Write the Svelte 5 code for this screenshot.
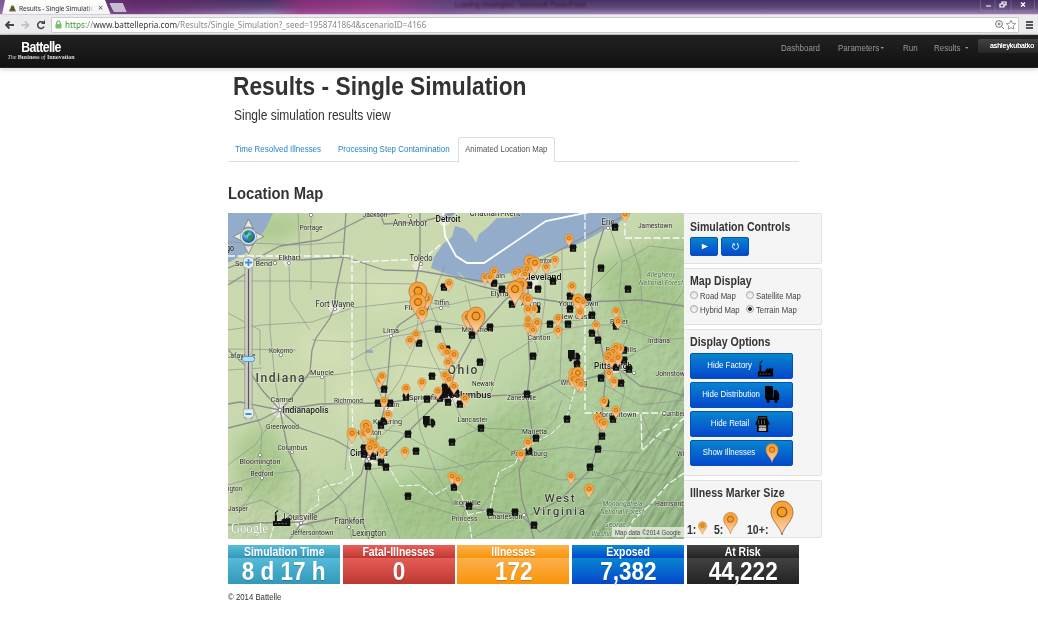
<script>
  const stats = [
    { name: 'Simulation Time', value: '8 d 17 h', kind: 'info' },
    { name: 'Fatal-Illnesses', value: '0', kind: 'danger' },
    { name: 'Illnesses', value: '172', kind: 'warning' },
    { name: 'Exposed', value: '7,382', kind: 'primary' },
    { name: 'At Risk', value: '44,222', kind: 'inverse' }
  ];

  // [text, centre x, centre y, width, font size, style]
  const labels = [
    ['Portage', 311, 227.5, 23, 7], ['Jackson', 375, 214, 25, 7], ['Ann Arbor', 410, 222.5, 34, 7.5],
    ['Detroit', 448, 219, 25, 8, 'city'], ['Chatham-Kent', 495, 213, 51, 7.5], ['Elkhart', 289.5, 257.5, 22, 7],
    ['South Bend', 253.5, 263.5, 37, 7], ['go', 230, 248, 8, 8, 'city'], ['Toledo', 421, 258, 23, 7.5],
    ['Fort Wayne', 335, 303.5, 39, 7.5], ['Tiffin', 441.5, 302, 15, 6.5], ['Findlay', 417, 307.5, 25, 7],
    ['Lima', 391, 330.5, 16, 7], ['Lafayette', 241, 355, 29, 7], ['Kokomo', 281, 350.5, 24, 6.5],
    ['Muncie', 322, 372.5, 24, 6.5], ['Indiana', 280, 377.5, 49, 10.5, 'state'], ['Ohio', 462.5, 369.5, 30, 10.5, 'state'],
    ['Richmond', 348.5, 400, 29, 6.5], ['Carmel', 282, 399.5, 23, 7], ['Indianapolis', 305.5, 410, 46, 8, 'city'],
    ['Greenwood', 282.5, 426.5, 33, 6.8], ['Columbus', 292.5, 447.5, 30, 6.8], ['Bloomington', 260, 461, 41, 7],
    ['Bedford', 262, 473, 23, 6.8], ['ngton', 234, 488, 16, 6.8], ['Jasper', 238, 508, 20, 6.5],
    ['Louisville', 300.5, 516.5, 34, 7.5], ['Jeffersontown', 312, 532.5, 43, 6.7], ['Frankfort', 349.5, 521.5, 30, 7.2],
    ['Lexington', 369, 532.5, 34, 7.5], ['Cincinnati', 369, 453, 38, 8, 'city'], ['Kettering', 387.5, 421.5, 29, 7],
    ['Hamilton', 368, 432, 27, 7], ['Dayton', 389, 404, 20, 7], ['Springfield', 427, 397.5, 36, 7],
    ['Columbus', 470, 395, 43, 8, 'city'], ['Newark', 483, 383, 22, 6.5], ['Lancaster', 472.5, 419.5, 30, 6.7],
    ['Zanesville', 521.5, 397, 29, 6.7], ['Marietta', 534.5, 431.5, 25, 6.7], ['Parkersburg', 529, 453, 36, 7],
    ['Wheeling', 574, 382.5, 27, 6.7], ['Ironville', 467.5, 502, 27, 7], ['Princess', 464.5, 518.5, 26, 6.5],
    ['Charleston', 505, 516, 35, 7], ['West', 559.5, 498, 30, 10, 'state'], ['Virginia', 559, 511, 52, 10, 'state'],
    ['Monongahela', 622.5, 504, 40, 6.2, 'park'], ['National Forest', 622, 512, 44, 6.2, 'park'],
    ['George', 615, 525, 22, 6.2, 'park'], ['Washin', 601.5, 533.5, 20, 6.2, 'park'],
    ['Harrisonburg', 675, 503.5, 40, 6.8], ['Winchester', 693, 453.5, 32, 6.8], ['Cumberland', 680, 413.5, 36, 6.8],
    ['Morgantown', 616, 414.5, 41, 7], ['Johnstown', 672, 373, 33, 6.8], ['Pittsburgh', 613, 366, 38, 8, 'city'],
    ['Penn Hills', 621, 349, 31, 6.8], ['Butler', 619, 321.5, 18, 6.8], ['Indiana', 659, 340, 22, 6.5],
    ['New Castle', 577, 316, 37, 6.8], ['Youngstown', 578.5, 303, 40, 7], ['Canton', 539, 337.5, 23, 7],
    ['Akron', 531, 303.5, 20, 7], ['Mansfield', 477.5, 329, 32, 7], ['Elyria', 499.5, 293, 18, 7],
    ['Lorain', 495, 275.5, 20, 7], ['Cleveland', 542, 277, 39, 8, 'city'], ['Mentor', 543, 260, 18, 6.8],
    ['Erie', 608, 221.5, 13, 7.5], ['Jamestown', 655, 225.5, 34, 7],
    ['Allegheny', 661, 275, 29, 6.2, 'park'], ['National Forest', 661, 283, 44, 6.2, 'park']
  ];

  const roads = {
    major: [
      '228,268 250,260 300,260 345,257 384,270 420,271 455,277 500,284 530,278',
      '346,213 343,258 336,290 334,308 330,318 316,338 312,350 310,372 290,400 280,410',
      '250,262 280,246 320,240 368,216 400,213', '228,285 252,270',
      '420,213 420,262 416,280 418,312 399,325 391,336 388,375 384,410 376,440 369,458 366,480 362,520 369,539',
      '228,350 245,365 262,390 280,410 300,428 335,440 366,458', '280,410 240,402 228,404',
      '280,410 320,404 385,403 420,398 450,393 490,396 527,394 560,380 582,380 600,375 615,366',
      '280,410 288,450 300,475 300,525 290,539', '228,428 260,420 280,410',
      '366,458 380,460 400,440 435,405 450,393 455,370 474,335 505,300 525,285',
      '300,525 335,518 362,522', '366,458 361,475 335,500 302,522 260,523 228,525',
      '455,278 480,286 520,296 560,302 584,302 640,300 684,306', '528,285 528,330 530,370 527,395 532,430 528,452 519,470 522,500 527,515 534,539',
      '460,506 480,510 520,515 540,532 560,520 571,510', '530,266 560,250 604,226 630,213',
      '604,228 594,260 590,300 600,340 604,360 605,385 602,412 598,445 590,470 560,500 530,515',
      '615,366 640,386 665,390 684,396', '380,213 384,224 420,222 455,213'
    ],
    minor: [
      '228,242 300,245 344,242', '311,213 311,290', '228,281 300,281 343,283 420,284', '270,262 270,330 275,380 280,410',
      '289,263 290,300 310,330', '228,330 262,325 312,322 352,308 420,300 450,307', '228,313 260,330 260,365', '296,350 228,349',
      '312,340 352,342 390,335 430,320 476,328', '366,260 366,360 384,403', '352,360 391,337 440,329 478,328 530,325 580,320',
      '270,380 325,376 370,370 400,365 450,370', '325,376 325,407', '348,404 348,440 345,470', '250,400 262,430 260,462 262,480 240,510',
      '280,410 255,445 228,465', '228,485 262,475 300,470', '325,480 345,505 349,525 352,539', '366,470 400,465 440,470 480,462 520,460',
      '364,460 385,500 400,539', '410,470 440,500 466,506 455,539', '416,398 420,430 435,470 454,505',
      '450,393 462,420 490,438 510,450 528,452', '450,393 430,350 418,312', '455,370 440,330 430,305 445,265', '465,285 476,330 486,360 480,380',
      '490,396 500,360 525,345 540,335', '540,336 560,330 590,325 619,325 659,340 684,338', '530,325 538,350 533,370',
      '528,394 550,385 572,400 566,420', '536,440 555,420 562,400', '530,470 560,480 598,478 630,470 665,475 684,460',
      '529,452 565,447 598,450 640,453', '615,366 640,350 660,340 670,310 684,290', '615,366 630,330 619,300 622,262 610,228',
      '622,262 650,246 684,250', '630,240 640,270 642,305', '590,290 618,262', '545,260 545,300 540,335', '562,250 562,330 560,380',
      '528,280 560,270 585,268', '605,385 640,405 684,400', '641,413 650,435 684,450', '590,470 620,480 642,510 640,539',
      '571,510 600,503 640,508 670,500 684,515', '528,515 500,525 470,539', '480,510 500,480 528,460', '384,403 400,380 415,345 418,320',
      '376,440 400,420 428,398', '384,430 400,432 435,452 470,470 500,450', '300,260 298,213', '228,370 262,368', '228,510 262,500 300,520',
      '455,440 480,428 525,430', '405,500 440,510 466,518', '320,539 312,525 300,525', '530,300 500,296 470,300 418,312', '618,366 625,390 619,415'
    ]
  };

  // [centre x, top y, height]
  const pins = [
    [625, 210, 13], [569, 234, 13], [555, 256, 12], [546, 263, 12], [530, 255, 18], [535, 257, 18], [527, 264, 14], [525, 270, 12],
    [519, 267, 12], [515, 269, 12], [494, 267, 13], [485, 273, 12], [490, 273, 12], [521, 278, 20], [515, 281, 25],
    [525, 293, 14], [528, 294, 15], [528, 305, 13], [534, 305, 12], [528, 316, 11], [528, 321, 13], [537, 318, 14], [533, 326, 12],
    [558, 314, 13], [558, 326, 13], [572, 282, 13], [578, 294, 18], [583, 298, 12], [580, 308, 13], [616, 307, 12], [618, 317, 13],
    [596, 321, 12], [468, 311, 19], [472, 313, 16], [476, 307, 28], [449, 279, 13], [427, 293, 17], [424, 292, 13], [418, 282, 28],
    [418, 294, 25], [422, 307, 17], [416, 330, 13], [410, 336, 13], [442, 343, 13], [447, 348, 13], [454, 350, 14], [448, 358, 13],
    [445, 371, 13], [449, 375, 13], [454, 382, 13], [380, 376, 13], [382, 372, 13], [406, 384, 13], [422, 378, 13], [438, 387, 13],
    [384, 397, 12], [388, 410, 13], [352, 428, 16], [366, 420, 18], [364, 429, 14], [368, 426, 14], [372, 438, 14], [375, 442, 13],
    [370, 443, 14], [382, 447, 13], [405, 447, 13], [452, 472, 13], [458, 475, 13], [465, 394, 13], [574, 368, 16], [578, 367, 18],
    [573, 374, 15], [578, 376, 16], [581, 380, 13], [620, 344, 13], [616, 343, 13], [613, 347, 13], [609, 350, 14], [607, 354, 12],
    [618, 353, 14], [612, 357, 11], [609, 369, 12], [614, 377, 13], [604, 397, 13], [616, 406, 13], [598, 413, 15], [601, 417, 14],
    [604, 419, 13], [528, 438, 13], [521, 450, 13], [571, 472, 13], [589, 484, 15]
  ];

  const stores = [
    [444, 287], [438, 329], [419, 343], [447, 349], [432, 376], [615, 227], [573, 248], [601, 268], [628, 289], [588, 297],
    [570, 296], [553, 281], [529, 285], [538, 289], [537, 309], [494, 283], [502, 289], [512, 304], [570, 309], [592, 315],
    [550, 324], [568, 324], [592, 333], [598, 340], [616, 326], [490, 327], [472, 335], [533, 356], [480, 362], [577, 364],
    [601, 378], [624, 350], [624, 360], [616, 367], [629, 369], [384, 389], [378, 403], [390, 403], [406, 397], [427, 399],
    [445, 387], [445, 394], [448, 402], [456, 393], [460, 404], [381, 425], [384, 421], [408, 434], [416, 451], [452, 442],
    [364, 448], [364, 454], [373, 456], [368, 466], [381, 462], [386, 467], [408, 496], [454, 487], [481, 428], [527, 394],
    [567, 419], [536, 438], [529, 451], [621, 383], [613, 419], [602, 436], [598, 449], [590, 467], [469, 506], [490, 512],
    [515, 512], [534, 525], [606, 403], [451, 390], [440, 398]
  ];

  const towns = [
    [311, 215], [275, 263], [289, 263], [335, 309], [391, 336], [281, 355], [322, 377], [280, 410], [260, 455], [262, 478],
    [301, 523], [369, 459], [421, 264], [441, 308], [410, 216], [608, 228], [349, 527], [292, 452], [524, 515], [634, 373]
  ];
  const urban = [
    [280, 410, 9], [335, 308, 7], [418, 266, 6], [369, 458, 8], [301, 522, 7], [450, 393, 13], [462, 400, 9], [530, 282, 10],
    [615, 364, 11], [388, 408, 7], [530, 302, 7], [445, 219, 8], [607, 228, 4], [391, 335, 4], [288, 262, 5], [452, 385, 8]
  ];
</script>

{#snippet pin(x, y, h)}
  <g transform="translate({x} {y}) scale({h / 34})">
    <path d="M0 34C-2 25-11 20-11 11a11 11 0 0 1 22 0C11 20 2 25 0 34Z" fill="url(#pinFill)" stroke="#b3743f" stroke-width="1" />
    <circle cy="11" r="4.8" fill="#f79b23" stroke="#8b5520" stroke-width="1.3" />
  </g>
{/snippet}

{#snippet truck()}
  <path d="M0 0h10v12H0zM11 4h4l3 4v5H11zM1 12h17v2H1z" /><circle cx="4" cy="15" r="2" /><circle cx="14" cy="15" r="2" />
{/snippet}

{#snippet factory()}
  <path d="M0 12h18v6H0zM2 5l2-1v9H2zM9 10l3-2v2l3-3v2l3-1v6H9z" />
  <path d="M3 4C1 2 5 1 5-1" fill="none" stroke="currentColor" stroke-width="1.2" />
  <path d="M2 15h14" stroke="#777" stroke-width="1" stroke-dasharray="2 1.5" />
{/snippet}

<div class="window">
  <div class="tabstrip">
    <div class="tab">
      <svg class="favicon" viewBox="0 0 10 10"><path d="M3 4a2 2 0 0 1 4 0v1l2 4H1l2-4z" fill="#7c7542" /><path d="M2 7h6M3 5h4" stroke="#3d3a22" /></svg>
      <span class="tabname">Results - Single Simulation</span><span class="x">×</span>
    </div>
    <svg class="newtab" viewBox="0 0 18 9"><path d="M1 .5h12.500l3.500 8H5z" fill="#c7bcd6" stroke="#e0d8e8" stroke-width=".7" /></svg>
    <span class="behind">Loading Strategies - Microsoft PowerPoint</span>
    <svg class="winctl" viewBox="0 0 56 12"><path d="M.5 0v9q0 2 2 2h50q2 0 2-2V0M15 0v11M31 0v11" fill="none" stroke="#9c89ac" stroke-width=".6" opacity=".7" /><path d="M6 6h5M20 4h4v3h-4zM22 4V2h4v3h-2M41 2.500l4 4M45 2.500l-4 4" fill="none" stroke="#fff" stroke-width="1.200" /></svg>
  </div>
  <div class="toolbar">
    <svg class="nav" viewBox="0 0 50 20"><path d="M14 10H6M9.500 6.500 6 10l3.500 3.500" fill="none" stroke="#444" stroke-width="1.800" /><path d="M21 10h7M25 6.500l3.500 3.500-3.500 3.500" fill="none" stroke="#bbb" stroke-width="1.500" /><path d="M43.500 8A3.300 3.300 0 1 0 44 11.500" fill="none" stroke="#444" stroke-width="1.500" /><path d="M45 5v4h-4z" fill="#444" /></svg>
    <div class="address">
      <svg class="lock" viewBox="0 0 8 10"><path d="M2 5V3a2 2 0 0 1 4 0v2" fill="none" stroke="#5dab4c" stroke-width="1.200" /><rect x=".5" y="4.500" width="7" height="5" rx=".8" fill="#77c164" /></svg>
      <span class="url"><i>https</i>://<b>www.battellepria.com</b>/Results/Single_Simulation?_seed=1958741864&amp;scenarioID=4166</span>
      <svg class="pageicons" viewBox="0 0 24 12"><circle cx="5" cy="5" r="3.400" fill="none" stroke="#777" stroke-width="1" /><path d="M7.500 7.500 10 10M3.500 5h3M5 3.500v3" stroke="#777" stroke-width="1" /><path d="m17 1.200 1.400 3 3.300.4-2.400 2.300.6 3.300-2.900-1.600-2.900 1.600.6-3.300-2.400-2.300 3.300-.4z" fill="#fff" stroke="#888" stroke-width=".9" /></svg>
    </div>
    <div class="menu"><i></i><i></i><i></i></div>
  </div>

  <header>
    <div class="brand"><strong>Battelle</strong><em>The <b>Business</b> of <b>Innovation</b></em></div>
    <nav>
      <a class="n1">Dashboard</a><a class="n2">Parameters<s></s></a><a class="n3">Run</a><a class="n4">Results <s class="far"></s></a>
      <span class="user">ashleykubatko</span>
    </nav>
  </header>

  <main>
    <h1>Results - Single Simulation</h1>
    <p class="lead">Single simulation results view</p>
    <div class="tabs"><a class="t1">Time Resolved Illnesses</a><a class="t2">Processing Step Contamination</a><a class="active"><span>Animated Location Map</span></a></div>
    <h2>Location Map</h2>

    <div class="content">
      <svg class="map" viewBox="228 213 456 326">
        <defs>
          <linearGradient id="land" x1="0" y1="0" x2="1" y2="1"><stop offset="0" stop-color="#ccd8b0" /><stop offset=".45" stop-color="#c8d9ad" /><stop offset=".65" stop-color="#b6d3a1" /><stop offset="1" stop-color="#9cc18d" /></linearGradient>
          <linearGradient id="pinFill" x1="0" y1="0" x2="0" y2="1"><stop offset="0" stop-color="#f9a02a" /><stop offset=".4" stop-color="#f8aa4d" /><stop offset="1" stop-color="#fbdcc5" /></linearGradient>
          <linearGradient id="rail"><stop offset="0" stop-color="#a8a8a0" /><stop offset=".5" stop-color="#f6f6f2" /><stop offset="1" stop-color="#a8a8a0" /></linearGradient>
          <radialGradient id="globe" cx=".4" cy=".35"><stop offset="0" stop-color="#a9dcf8" /><stop offset="1" stop-color="#1b62b8" /></radialGradient>
          <filter id="relief" x="0" y="0" width="1" height="1"><feTurbulence type="fractalNoise" baseFrequency=".13" numOctaves="4" seed="4" /><feDiffuseLighting surfaceScale="2" lighting-color="#fff"><feDistantLight azimuth="225" elevation="55" /></feDiffuseLighting></filter>
          <filter id="ridge" x="0" y="0" width="1" height="1"><feTurbulence type="fractalNoise" baseFrequency=".02 .17" numOctaves="3" seed="9" /><feDiffuseLighting surfaceScale="3.600" lighting-color="#fff"><feDistantLight azimuth="260" elevation="52" /></feDiffuseLighting></filter>
          <filter id="soft"><feGaussianBlur stdDeviation="9" /></filter>
          <mask id="hills"><path d="M228 480 260 440 300 470 400 500 450 450 500 400 550 350 610 280 640 240 700 230V560H228Z" fill="#bbb" filter="url(#soft)" /></mask>
          <mask id="east"><path d="M710 330 650 400 635 450 600 485 560 539V570H710Z" fill="#fff" filter="url(#soft)" /></mask>
        </defs>
        <rect x="228" y="213" width="456" height="326" fill="url(#land)" />
        <g fill="#dde3bb" filter="url(#soft)" opacity=".5"><path d="M345 270H450L430 300 370 315ZM390 350H470V400H400ZM330 380H370V420H340ZM300 330H350V370H300Z" /></g>
        <g fill="#a3c688" filter="url(#soft)" opacity=".75"><path d="M250 213H320L280 245 250 240ZM235 440 270 420 295 470 280 500 240 500ZM370 490 450 470 470 430 540 400 560 500 500 539H400ZM590 260 684 240V350L620 330Z" /></g>
        <g mask="url(#hills)" class="shade soft-relief"><rect x="228" y="213" width="456" height="326" filter="url(#relief)" /></g>
        <g mask="url(#east)" class="shade"><g transform="rotate(-58 650 470)"><rect x="460" y="320" width="380" height="340" filter="url(#ridge)" /></g></g>
        <g fill="#e9e6da">{#each urban as [x, y, r]}<path d="M{x - r} {y}l{r * .5}-{r * .7} {r * .7} 0 {r * .7} {r * .6}-{r * .4} {r * .8}-{r * .9} {r * .2}z" />{/each}</g>
        <g fill="#93acca">
          <path d="M228 213H273L266 228 255 243 246 253 235 259 228 263Z" />
          <path d="M431 268 434 257 443 244 452 237 455 226 465 229 472 236 476 243 479 234 486 229 497 218 510 218 521 213H631L617 224 606 229 590 238 572 247 550 253 536 258 527 267 512 273 497 275 482 283 468 280 456 271 463 278 447 274Z" />
          <path d="M446 213h8l-3 7-8-1zM366 350h7v3h-7zM453 357h5l-3 3z" />
        </g>
        <g fill="none" stroke="#8b908b" stroke-linejoin="round">
          {#each roads.minor as p}<polyline points={p} stroke-width=".75" opacity=".85" />{/each}
          {#each roads.major as p}<polyline points={p} stroke-width="1.300" />{/each}
        </g>
        <g fill="none" stroke="#fff" stroke-width="1.300">
          <polyline points="443,213 445,236 456,256 467,263 484,263 546,221 590,212" stroke-width="1.800" />
          <g stroke-dasharray="7 2.500" opacity=".9"><path d="M228 256H352V400M353 262 424 259 441 244M585 213V413H684M625 219V238H684M641 414 642 451 662 431 673 428 684 418" />
            <path d="M352 400 353 440 349 457 353 475 341 483 330 485 318 490 319 504 310 510 300 521 286 517 275 522 270 539M366 465 385 460 400 486 420 485 434 495 450 486 461 494 468 515 472 539M468 515 490 510 495 485 499 472 515 464 521 450 536 442 551 434 566 420 575 390 570 375 585 345" stroke-dasharray="6 2" stroke-width="1" />
            <path d="M684 473 667 485 650 505 633 520 625 539" />
          </g>
        </g>
        <g fill="#fff" stroke="#777" stroke-width=".8">{#each towns as [x, y]}<circle cx={x} cy={y} r="1.700" />{/each}</g>
        <g class="labels">
          {#each labels as [text, x, y, w, size, kind]}
            <text class={kind ?? 'town'} {x} y={y + size * .4} font-size={size * 1.16} textLength={w} lengthAdjust={kind === 'state' ? 'spacing' : 'spacingAndGlyphs'}>{text}</text>
          {/each}
        </g>
        <g fill="#111">
          {#each stores as [x, y]}
            <path d="M{x - 2.800} {y - 3.500}h5.600l1 3.200h-.7v4h-6.200v-4h-.7z" /><path d="M{x - 1} {y + 1.800}h2.500" stroke="#777" stroke-width=".7" />
          {/each}
          <g transform="translate(568 350) scale(.68)">{@render truck()}</g>
          <g transform="translate(423 416) scale(.68)">{@render truck()}</g>
          <g transform="translate(442 387) scale(.65)">{@render truck()}</g>
          <g color="#111" transform="translate(273 511) scale(.96 .84)">{@render factory()}</g>
        </g>
        {#each pins as [x, y, h]}{@render pin(x, y, h)}{/each}
        <g>
          <g fill="#e4e6df" stroke="#777a73" stroke-width=".8"><path d="m248.500 219 5 10q-5-4-10 0zM248.500 254l5-10q-5 4-10 0zM233 236.500l10-5q-4 5 0 10zM264 236.500l-10-5q4 5 0 10z" /></g>
          <circle cx="248.500" cy="236.500" r="8" fill="#eee" stroke="#85908f" stroke-width=".6" />
          <circle cx="248.500" cy="236.500" r="6.500" fill="url(#globe)" /><path d="M244 233q3-3 5-2l-1 3-2 2zM249 235l4 1-1 4-3 2-1-4zM251 232l2 1-1 1z" fill="#21944a" />
          <rect x="244.500" y="257" width="8" height="163" rx="3" fill="url(#rail)" opacity=".85" stroke="#929790" stroke-width=".5" /><path d="M248.500 269V409" stroke="#555" stroke-width="1.400" />
          <path d="M243.500 258.500q5-3 10 0v8q-5 4-10 0zM243.500 409h10v7q-5 5-10 0z" fill="#e7edf0" stroke="#8f989b" stroke-width=".6" />
          <path d="M248.500 259v7M245 262.500h7M245.500 414h6" stroke="#3a93d5" stroke-width="1.800" />
          <rect x="242.500" y="356.500" width="12" height="5" rx="2" fill="#aee1fa" stroke="#438ec4" stroke-width=".8" />
        </g>
        <text class="google" x="231" y="533" font-size="15" textLength="37" lengthAdjust="spacingAndGlyphs">Google</text>
        <rect x="612" y="527" width="72" height="10" fill="#edf2e9" opacity=".75" />
        <text x="615" y="535" font-size="7.200" textLength="66" lengthAdjust="spacingAndGlyphs" fill="#444" font-family="Liberation Sans">Map data ©2014 Google</text>
      </svg>

      <aside>
        <section class="sim"><h3>Simulation Controls</h3>
          <div class="pair"><button><svg viewBox="0 0 10 10"><path d="m2 2 7 3-7 3z" fill="#fff" /></svg></button><button><svg viewBox="0 0 10 10"><path d="M3 2.200A3.300 3.300 0 1 0 7 2.200M1.800 2h2v2M8.200 2H6.500" fill="none" stroke="#fff" /></svg></button></div>
        </section>
        <section class="display"><h3>Map Display</h3>
          <div class="radios"><label><i></i><span>Road Map</span></label><label><i></i><span>Satellite Map</span></label><label><i></i><span>Hybrid Map</span></label><label><i class="on"></i><span>Terrain Map</span></label></div>
        </section>
        <section class="options"><h3>Display Options</h3>
          <button class="wide"><span>Hide Factory</span><svg class="g1" viewBox="-1 -2 20 21" color="#0a1424">{@render factory()}</svg></button>
          <button class="wide"><span>Hide Distribution</span><svg class="g2" viewBox="0 0 19 18" preserveAspectRatio="none">{@render truck()}</svg></button>
          <button class="wide"><span>Hide Retail</span><svg class="g3" viewBox="0 0 16 19"><path d="M3 1h10v3l3 6h-2v8H2v-8H0l3-6z" /><path d="M4 3h8M4 5v5M7 5v5M10 5v5" stroke="#666" /><path d="M4 11h8v6H4z" fill="#bbb" /><path d="M4 13h8" stroke="#222" stroke-dasharray="2 1" /></svg></button>
          <button class="wide"><span>Show Illnesses</span><svg class="g4" viewBox="-12 -1 24 36">{@render pin(0, 0, 34)}</svg></button>
        </section>
        <section class="sizes"><h3>Illness Marker Size</h3>
          <div class="legend"><b>1:</b><svg class="s1" viewBox="-12 -1 24 36">{@render pin(0, 0, 34)}</svg><b class="b5">5:</b><svg class="s5" viewBox="-12 -1 24 36">{@render pin(0, 0, 34)}</svg><b class="b10">10+:</b><svg class="s10" viewBox="-12 -1 24 36">{@render pin(0, 0, 34)}</svg></div>
        </section>
      </aside>
    </div>

    <div class="stats">{#each stats as s}<div class="stat {s.kind}"><div class="name"><span>{s.name}</span></div><div class="value"><span>{s.value}</span></div></div>{/each}</div>
    <footer>© 2014 Battelle</footer>
  </main>
</div>

<style>
  :global(body) { background: #fff; }
  * { box-sizing: border-box; }
  .window { width: 1038px; height: 627px; overflow: hidden; font-family: 'Liberation Sans', Arial, sans-serif; color: #333; }
  svg { display: block; flex: none; }
  .tabstrip { height: 15px; display: flex; background: linear-gradient(90deg, #9c6bb0aa, #6b246baa 13%, #53337000 26%, #a52b8399 29%, #b53b9299 37%, #73488a88 43%, #53337000 50%), linear-gradient(#463160, #60497c 55%, #9a83b1); border-bottom: 1px solid #d7cde0; overflow: hidden; }
  .tab { width: 110px; height: 15px; margin-left: 2px; padding-left: 6px; display: flex; align-items: center; background: linear-gradient(#fff, #f3f3f3); clip-path: polygon(3px 0, 103px 0, 109px 100%, 0 100%); font: 7.200px 'Noto Sans', sans-serif; }
  .favicon { width: 9px; height: 10px; margin-right: 2px; }
  .tabname { width: 86px; margin-right: -12px; transform: scaleX(.87); transform-origin: left; overflow: hidden; white-space: nowrap; font-size: 7.600px; letter-spacing: -.1px; mask-image: linear-gradient(90deg, #000 90%, transparent); }
  .x { margin-left: 5px; color: #555; font-size: 9px; }
  .newtab { width: 18px; height: 9px; margin: 3px 0 0 -3px; }
  .behind { margin-left: 328px; padding-top: 1px; font-size: 7px; color: #341637; filter: blur(1px); white-space: nowrap; width: 139px; }
  .winctl { width: 56px; height: 12px; margin-left: 386px; }
  .toolbar { height: 20px; display: flex; align-items: center; background: #ececee; border-bottom: 1px solid #c4c4c6; }
  .nav { width: 50px; height: 20px; }
  .address { width: 968px; height: 16px; margin-left: 1px; padding-left: 3px; display: flex; align-items: center; background: #fff; border: 1px solid #ccc; border-radius: 1px; }
  .lock { width: 7px; height: 9px; margin-right: 3px; }
  .url { font: 8.800px 'Noto Sans', sans-serif; transform: scaleX(.929); transform-origin: left; color: #888; white-space: nowrap; width: 362px; }
  .url i { color: #36982b; font-style: normal; } .url b { color: #333; font-weight: 400; }
  .pageicons { width: 24px; height: 12px; margin-left: auto; }
  .menu { width: 7px; margin-left: 7px; display: grid; gap: 1px; } .menu i { height: 2px; background: #555; }
  header { height: 33px; display: flex; background: linear-gradient(#222, #111); border-bottom: 1px solid #252525; box-shadow: 0 1px 5px #0003; color: #999; }
  .brand { width: 77px; padding: 5px 2px 0 7px; color: #fff; text-align: center; line-height: 1; }
  .brand strong { display: block; font: 700 14px/14px 'Liberation Sans', sans-serif; letter-spacing: -.7px; transform: scaleX(.88); }
  .brand em { display: block; white-space: nowrap; font: italic 6px/7px 'Liberation Serif', serif; letter-spacing: -.05px; color: #ddd; } .brand em b { font-style: normal; }
  nav { display: flex; width: 961px; font-size: 9px; padding-top: 8px; line-height: 10px; }
  nav a { display: block; white-space: nowrap; transform: scaleX(.885); transform-origin: left; } .n1 { margin-left: 704px; width: 57px; } .n2 { width: 65px; } .n3 { width: 32px; } .n4 { width: 44px; }
  nav s { display: inline-block; border: 2.500px solid transparent; border-top-color: #999; border-bottom: 0; margin: 0 0 2px 1px; } nav s.far { margin-left: 2px; }
  .user { width: 60px; height: 14px; margin-top: -4px; padding: 1px 4px 0 0; text-align: right; color: #fff; font-size: 6.900px; line-height: 12px; border-radius: 3px 0 0 3px; background: linear-gradient(#424242, #262626); white-space: nowrap; text-shadow: 0 0 .6px #fff; }
  main { width: 594px; margin-left: 228px; }
  h1, h2, h3, .lead, .t1, .t2, footer { transform-origin: left; white-space: nowrap; }
  h1 { margin: 4px 0 0 5px; font-size: 25.300px; line-height: 29px; transform: scaleX(.9); }
  .lead { margin: 6px 0 0 5.500px; font-size: 13.900px; line-height: 17px; transform: scaleX(.863); }
  .tabs { width: 571px; height: 25px; margin-top: 13px; display: flex; border-bottom: 1px solid #ddd; font-size: 9px; line-height: 24px; color: #2585c7; white-space: nowrap; }
  .t1 { margin-left: 7px; width: 103px; transform: scaleX(.885); } .t2 { width: 120px; transform: scaleX(.885); }
  .active { display: flex; justify-content: center; width: 97px; height: 25px; line-height: 23px; color: #555; background: #fff; border: 1px solid #ddd; border-bottom: 0; border-radius: 3px 3px 0 0; } .active span { transform: scaleX(.87); }
  h2 { margin: 22px 0 0; font-size: 17px; line-height: 20px; transform: scaleX(.87); }
  .content { display: flex; height: 326px; margin-top: 9px; }
  .map { width: 456px; height: 326px; overflow: hidden; }
  .shade { mix-blend-mode: multiply; opacity: .4; } .soft-relief { opacity: .36; }
  .labels text { font-family: Roboto, sans-serif; text-anchor: middle; paint-order: stroke; stroke: #edf1df; stroke-width: 1px; stroke-opacity: .75; fill: #262626; }
  .labels .city { fill: #111; font-weight: 500; } .labels .state { fill: #3c4038; font-weight: 500; } .labels .park { fill: #3f6f47; font-style: italic; }
  .google { font-family: 'Liberation Serif', serif; fill: #fff; stroke: #879780; stroke-width: .6px; paint-order: stroke; }
  aside { width: 138px; display: flex; flex-direction: column; gap: 4px; }
  section { background: #f5f5f5; border: 1px solid #e1e1e1; border-left: 0; border-radius: 0 2px 2px 0; padding: 6px 0 0 6px; }
  .sim { height: 51px; padding-top: 7px; } .display { height: 57px; } .options { height: 147px; } .sizes { height: 58px; }
  h3 { margin: 0; font-size: 12px; line-height: 13px; transform: scaleX(.88); }
  .pair { display: flex; gap: 3px; margin-top: 3px; }
  button { display: flex; align-items: center; justify-content: center; width: 28px; height: 19px; padding: 0; border: 1px solid #0552b5; border-radius: 2px; color: #fff; background: linear-gradient(#0785cf, #0547cc); font: 9px 'Liberation Sans', sans-serif; white-space: nowrap; }
  button span { transform: scaleX(.875); margin-top: -2px; }
  .pair svg { width: 9px; height: 9px; }
  .radios { display: grid; grid-template-columns: 56px 70px; margin-top: 1px; font-size: 9px; line-height: 14px; white-space: nowrap; color: #444; }
  .radios label { display: flex; align-items: center; gap: 2px; } .radios span { transform: scaleX(.86); transform-origin: left; }
  .radios i { flex: none; width: 8px; height: 8px; border: 1px solid #aaa; border-radius: 50%; background: linear-gradient(#e1e1e1, #fafafa); margin-top: -3px; } .radios .on { background: radial-gradient(#333 0 1.700px, #eee 2.200px); }
  .wide { width: 103px; height: 26px; margin-bottom: 3px; padding-right: 5px; }
  .options h3 { margin-bottom: 4px; }
  .g1 { width: 17px; height: 19px; margin: 4px 0 0 2px; } .g2 { width: 15px; height: 18px; margin-left: 1px; } .g3 { width: 15px; height: 20px; margin-left: 3px; } .g4 { width: 14px; height: 20px; margin-left: 5px; }
  .legend { height: 39px; display: flex; align-items: flex-end; margin: -4px 0 0 -3px; font-size: 12px; line-height: 11px; }
  .legend b { transform: scaleX(.88); transform-origin: left; margin-bottom: -1px; }
  .s1 { width: 9px; height: 14px; margin-left: 0; } .s5 { width: 15px; height: 24px; margin: 0 0 0 -1px; } .s10 { width: 24px; height: 36px; margin: 0 0 -1px -2px; } .b5 { margin-left: 7px; } .b10 { margin-left: 9px; }
  .stats { display: grid; grid-template-columns: repeat(5, 112px); column-gap: 2.700px; margin-top: 6px; }
  .stat { height: 39px; padding-top: 1px; text-align: center; color: #fff; background: linear-gradient(var(--a), var(--b)); text-shadow: 0 1px 1px #0003; font-weight: 700; }
  .stat span { display: inline-block; white-space: nowrap; }
  .name, .value { background: linear-gradient(var(--a), var(--b)); }
  .name { height: 12px; font-size: 12px; line-height: 12px; } .value { height: 26px; font-size: 25px; line-height: 26px; }
  .name span { transform: scaleX(.87); } .value span { transform: scaleX(.9); }
  .info { --a: #56bad8; --b: #3299b8; } .danger { --a: #e75c57; --b: #bd3832; } .warning { --a: #fbb04b; --b: #f89409; } .primary { --a: #0786cf; --b: #0547cc; } .inverse { --a: #424242; --b: #232323; }
  footer { margin-top: 8px; font-size: 9px; line-height: 11px; transform: scaleX(.865); }
</style>
